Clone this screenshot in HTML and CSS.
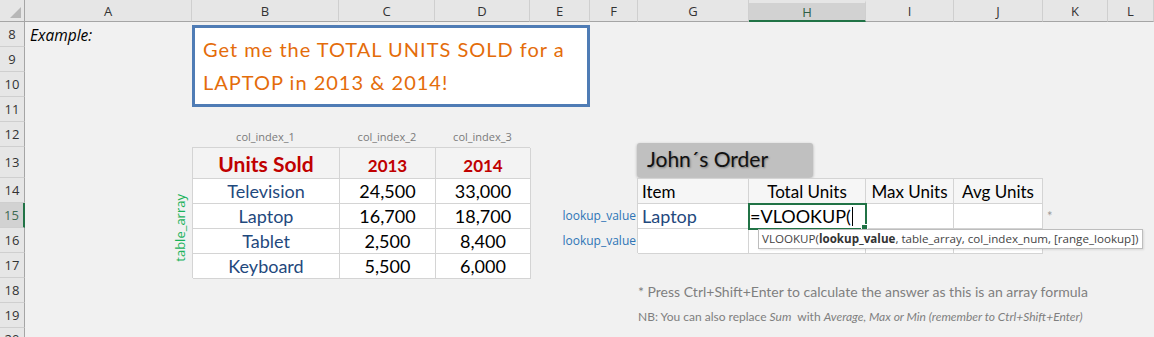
FILE: index.html
```html
<!DOCTYPE html>
<html>
<head>
    <title>VLOOKUP Example</title>
    <link rel="stylesheet" href="styles.css">
</head>
<body>
    <div class="sheet">
        <!-- column headers -->
        <div class="col-hdr corner"><div class="corner-tri"></div></div>
        <div class="col-hdr">A</div>
        <div class="col-hdr">B</div>
        <div class="col-hdr">C</div>
        <div class="col-hdr">D</div>
        <div class="col-hdr">E</div>
        <div class="col-hdr">F</div>
        <div class="col-hdr">G</div>
        <div class="col-hdr selected">H</div>
        <div class="col-hdr">I</div>
        <div class="col-hdr">J</div>
        <div class="col-hdr">K</div>
        <div class="col-hdr">L</div>

        <!-- row headers -->
        <div class="row-hdr">8</div>
        <div class="row-hdr">9</div>
        <div class="row-hdr">10</div>
        <div class="row-hdr">11</div>
        <div class="row-hdr">12</div>
        <div class="row-hdr">13</div>
        <div class="row-hdr">14</div>
        <div class="row-hdr selected">15</div>
        <div class="row-hdr">16</div>
        <div class="row-hdr">17</div>
        <div class="row-hdr">18</div>
        <div class="row-hdr">19</div>
        <div class="row-hdr last">20</div>

        <div class="example">Example:</div>

        <div class="callout">
            Get me the TOTAL UNITS SOLD for a<br>
            LAPTOP in 2013 &amp; 2014!
        </div>

        <div class="col-index ci-1">col_index_1</div>
        <div class="col-index ci-2">col_index_2</div>
        <div class="col-index ci-3">col_index_3</div>

        <div class="table-array">table_array</div>

        <div class="units-table">
            <div class="ut-head title">Units Sold</div>
            <div class="ut-head year">2013</div>
            <div class="ut-head year">2014</div>

            <div class="ut-item">Television</div>
            <div class="ut-num">24,500</div>
            <div class="ut-num">33,000</div>

            <div class="ut-item">Laptop</div>
            <div class="ut-num">16,700</div>
            <div class="ut-num">18,700</div>

            <div class="ut-item">Tablet</div>
            <div class="ut-num">2,500</div>
            <div class="ut-num">8,400</div>

            <div class="ut-item">Keyboard</div>
            <div class="ut-num">5,500</div>
            <div class="ut-num">6,000</div>
        </div>

        <div class="order-title">John´s Order</div>

        <div class="lookup lk-1">lookup_value</div>
        <div class="lookup lk-2">lookup_value</div>

        <div class="order-table">
            <div class="ot-head left">Item</div>
            <div class="ot-head">Total Units</div>
            <div class="ot-head">Max Units</div>
            <div class="ot-head">Avg Units</div>

            <div class="ot-cell item">Laptop</div>
            <div class="ot-cell active">
                <span class="formula">=VLOOKUP(</span><span class="caret"></span>
                <div class="handle"></div>
                <div class="tooltip">VLOOKUP(<b>lookup_value</b>, table_array, col_index_num, [range_lookup])</div>
            </div>
            <div class="ot-cell"></div>
            <div class="ot-cell"></div>

            <div class="ot-cell"></div>
            <div class="ot-cell"></div>
            <div class="ot-cell"></div>
            <div class="ot-cell"></div>
        </div>

        <div class="star">*</div>

        <div class="note-main">* Press Ctrl+Shift+Enter to calculate the answer as this is an array formula</div>
        <div class="note-small">NB: You can also replace <i>Sum</i>&nbsp; with <i>Average, Max or Min (remember to Ctrl+Shift+Enter)</i></div>
    </div>
</body>
</html>
```

FILE: styles.css
```css
body {
    margin: 0;
    background: #f1f1f1;
    font-family: "Lato", "Liberation Sans", sans-serif;
    overflow: hidden;
}

.sheet {
    display: grid;
    grid-template-columns: 25px 167px 147px 96px 95px 60px 48px 111px 117px 88px 89px 65px 1fr;
    grid-template-rows: 22px repeat(5, 25px) 31px repeat(7, 25px);
    height: 337px;
}

/* headers */

.col-hdr {
    grid-row: 1;
    background: #e6e6e6;
    border-right: 1px solid #cfcfcf;
    border-bottom: 1px solid #a5a5a5;
    box-sizing: border-box;
    display: flex;
    align-items: center;
    justify-content: center;
    font-family: "Open Sans", sans-serif;
    font-size: 13px;
    color: #333;
    padding-top: 1px;
}

.col-hdr.selected {
    background: #d2d2d2;
    color: #2f5f45;
    border-top: 3px solid #e6e6e6;
    border-bottom: 2px solid #217346;
    padding-top: 0;
}

.corner {
    justify-content: flex-end;
    align-items: flex-end;
    padding: 0 3px 3px 0;
    border-right-color: #a5a5a5;
}

.corner-tri {
    width: 0;
    height: 0;
    border-left: 11px solid transparent;
    border-bottom: 11px solid #b7b7b7;
}

.row-hdr {
    grid-column: 1;
    background: #e6e6e6;
    border-right: 1px solid #a5a5a5;
    border-bottom: 1px solid #cfcfcf;
    box-sizing: border-box;
    display: flex;
    align-items: center;
    justify-content: center;
    font-family: "Open Sans", sans-serif;
    font-size: 13px;
    color: #333;
}

.row-hdr.last {
    align-items: flex-start;
    padding-top: 4px;
    line-height: 14px;
}

.row-hdr.selected {
    background: #d2d2d2;
    color: #3e6b52;
    border-right: 2px solid #217346;
}

/* top block */

.example {
    grid-area: 2 / 2;
    align-self: center;
    padding-left: 5px;
    font-family: "Open Sans", sans-serif;
    font-style: italic;
    font-size: 15.5px;
    color: #000;
}

.callout {
    grid-area: 2 / 3 / 6 / 7;
    align-self: start;
    margin-top: 3px;
    height: 82px;
    box-sizing: border-box;
    border: 3px solid #4f7cb5;
    background: #fff;
    padding: 5px 0 0 8px;
    font-size: 20px;
    line-height: 33px;
    letter-spacing: 1px;
    color: #e46c0a;
    white-space: nowrap;
}

/* units table */

.col-index {
    grid-row: 6;
    align-self: center;
    justify-self: center;
    font-family: "Open Sans", sans-serif;
    font-size: 11px;
    color: #7a7a7a;
    padding-top: 3px;
}

.ci-1 { grid-column: 3; }
.ci-2 { grid-column: 4; }
.ci-3 { grid-column: 5; }

.table-array {
    grid-area: 8 / 2 / 12 / 3;
    justify-self: end;
    align-self: center;
    margin-right: 3px;
    writing-mode: vertical-rl;
    transform: rotate(180deg);
    font-family: "Open Sans", sans-serif;
    font-size: 13px;
    color: #19b25a;
}

.units-table {
    grid-area: 7 / 3 / 12 / 6;
    display: grid;
    grid-template-columns: 147px 96px 95px;
    grid-template-rows: 31px repeat(4, 25px);
    border-top: 1px solid #d4d4d4;
    border-left: 1px solid #d4d4d4;
    box-sizing: border-box;
}

.units-table > div {
    border-right: 1px solid #d4d4d4;
    border-bottom: 1px solid #d4d4d4;
    display: flex;
    align-items: center;
    justify-content: center;
    background: #fff;
    font-size: 18px;
}

.units-table > .ut-head {
    background: #f3f3f3;
    color: #c00000;
    font-weight: bold;
}

.ut-head.title {
    font-size: 21px;
}

.ut-head.year {
    font-size: 17px;
    padding-top: 4px;
}

.ut-item {
    color: #1f497d;
}

.ut-num {
    color: #000;
}

/* order block */

.order-title {
    grid-area: 7 / 8 / 8 / 10;
    justify-self: start;
    align-self: end;
    margin: 0 0 1px -1px;
    width: 176px;
    height: 34px;
    box-sizing: border-box;
    background: #c0c0c0;
    border-radius: 3px;
    box-shadow: 0 1px 3px rgba(0, 0, 0, 0.3);
    padding: 3px 0 0 10px;
    font-size: 21px;
    color: #111;
    text-shadow: 1px 1px 2px rgba(0, 0, 0, 0.35);
}

.lookup {
    grid-column: 7;
    justify-self: end;
    align-self: center;
    padding-right: 2px;
    white-space: nowrap;
    font-family: "Open Sans", sans-serif;
    font-size: 12px;
    color: #2e75b6;
}

.lk-1 { grid-row: 9; }
.lk-2 { grid-row: 10; }

.order-table {
    grid-area: 8 / 8 / 11 / 12;
    display: grid;
    grid-template-columns: 111px 117px 88px 89px;
    grid-template-rows: repeat(3, 25px);
    border-top: 1px solid #d4d4d4;
    border-left: 1px solid #d4d4d4;
    box-sizing: border-box;
    margin-left: -1px;
}

.order-table > div {
    border-right: 1px solid #d4d4d4;
    border-bottom: 1px solid #d4d4d4;
    display: flex;
    align-items: center;
    font-size: 17px;
    color: #000;
}

.ot-head {
    justify-content: center;
    background: #f6f6f6;
}

.ot-head.left {
    justify-content: flex-start;
    padding-left: 4px;
}

.ot-cell {
    background: #fff;
}

.ot-cell.item {
    color: #1f497d;
    padding-left: 4px;
    font-size: 18px;
}

.ot-cell.active {
    position: relative;
    outline: 2px solid #217346;
    outline-offset: -1px;
    padding-left: 1px;
    font-size: 18px;
}

.caret {
    display: inline-block;
    width: 1px;
    height: 19px;
    background: #000;
    margin-left: 1px;
}

.handle {
    position: absolute;
    right: -3px;
    bottom: -3px;
    width: 5px;
    height: 5px;
    background: #217346;
    border: 1px solid #fff;
}

.tooltip {
    position: absolute;
    top: 100%;
    left: 9px;
    margin-top: 1px;
    z-index: 2;
    background: #fff;
    border: 1px solid #bdbdbd;
    padding: 1px 4px 2px 3px;
    white-space: nowrap;
    font-family: "Open Sans", sans-serif;
    font-size: 11.6px;
    color: #444;
    box-shadow: 1px 1px 2px rgba(0, 0, 0, 0.1);
}

.tooltip b {
    color: #333;
}

.star {
    grid-area: 9 / 12;
    align-self: center;
    padding-left: 4px;
    font-size: 13px;
    color: #9a9a9a;
}

/* notes */

.note-main {
    grid-area: 12 / 8;
    align-self: center;
    white-space: nowrap;
    font-size: 14px;
    color: #7f7f7f;
    padding-top: 2px;
}

.note-small {
    grid-area: 13 / 8;
    align-self: center;
    white-space: nowrap;
    font-size: 12px;
    color: #7f7f7f;
    padding-top: 2px;
}
```
